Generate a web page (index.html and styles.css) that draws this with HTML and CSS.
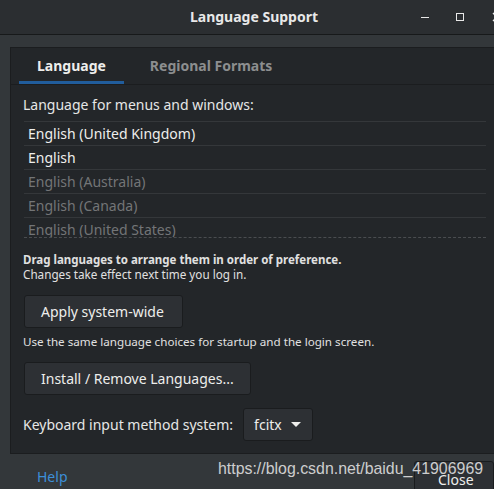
FILE: index.html
```html
<!DOCTYPE html>
<html>
<head>
<meta charset="utf-8">
<link rel="stylesheet" href="styles.css">
</head>
<body>
<div class="window">
  <header class="titlebar">
    <div class="title">Language Support</div>
    <div class="wm">
      <span class="wm-min"></span>
      <span class="wm-max"></span>
      <svg class="wm-close" width="10" height="10" viewBox="0 0 10 10"><path d="M1 1L9 9M9 1L1 9" stroke="#e8e8e8" stroke-width="1.4"/></svg>
    </div>
  </header>
  <main class="body">
    <section class="notebook">
      <nav class="tabs">
        <div class="tab active">Language</div>
        <div class="tab">Regional Formats</div>
      </nav>
      <div class="page">
        <div class="label">Language for menus and windows:</div>
        <div class="list">
          <div class="row">English (United Kingdom)</div>
          <div class="row">English</div>
          <div class="row dim">English (Australia)</div>
          <div class="row dim">English (Canada)</div>
          <div class="row dim">English (United States)</div>
        </div>
        <div class="hint">
          <div class="bold">Drag languages to arrange them in order of preference.</div>
          <div>Changes take effect next time you log in.</div>
        </div>
        <div class="btn btn-apply">Apply system-wide</div>
        <div class="hint2">Use the same language choices for startup and the login screen.</div>
        <div class="btn btn-install">Install / Remove Languages...</div>
        <div class="kbd">
          <span class="kbd-label">Keyboard input method system:</span>
          <div class="combo">fcitx <svg width="10" height="6" viewBox="0 0 10 6"><path d="M0 0H10L5 5Z" fill="#eeeeec"/></svg></div>
        </div>
      </div>
    </section>
    <footer class="actions">
      <span class="help">Help</span>
      <div class="close-btn">Close</div>
    </footer>
  </main>
  <div class="watermark">https://blog.csdn.net/baidu_41906969</div>
</div>
</body>
</html>
```
FILE: styles.css
```css
* { box-sizing: border-box; }
html, body { margin: 0; padding: 0; }
body {
  width: 494px;
  height: 489px;
  overflow: hidden;
  background: #33373a;
  font-family: "Noto Sans", "DejaVu Sans", sans-serif;
  color: #eeeeec;
}
.window { position: relative; width: 494px; height: 489px; overflow: hidden; }
.titlebar {
  height: 35px;
  background: #2b2e31;
  border-bottom: 1px solid #17191a;
  display: flex;
  align-items: center;
  justify-content: center;
  position: relative;
  padding-bottom: 2px;
}
.title { font-weight: bold; font-size: 14px; color: #e8e8e8; margin-left: 14px; }
.wm {
  position: absolute;
  left: 421px;
  top: 12px;
  display: flex;
  align-items: center;
  gap: 27px;
}
.wm-min { width: 8px; height: 1px; background: #e8e8e8; margin-top: 1px; }
.wm-max { width: 8px; height: 8px; border: 1px solid #e8e8e8; }
.wm-close { margin-left: 1px; }
.body { padding: 12px 0 0 10px; }
.notebook {
  height: 407px;
  background: #232629;
  border: 1px solid #1b1d1f;
  border-right: none;
  display: flex;
  flex-direction: column;
}
.tabs {
  height: 37px;
  display: flex;
  gap: 8px;
  padding-left: 8px;
  border-bottom: 1px solid #1b1d1f;
}
.tab {
  padding: 0 18px;
  display: flex;
  align-items: center;
  font-weight: bold;
  font-size: 14px;
  color: #8c8e8f;
  border-bottom: 3px solid transparent;
  padding-top: 2px;
}
.tab.active { color: #eeeeec; border-bottom-color: #215d9c; }
.page { padding: 11px 8px 0 12px; }
.label { font-size: 14px; line-height: 18px; color: #e6e6e6; }
.list {
  margin: 7px 0 0 1px;
  height: 117px;
  overflow: hidden;
  border-top: 1px solid #34373a;
  border-bottom: 1px dashed #4a4d50;
}
.row {
  height: 24px;
  border-bottom: 1px solid #34373a;
  padding-left: 4px;
  font-size: 14px;
  line-height: 23px;
  color: #eeeeec;
}
.row.dim { color: #737577; }
.hint { margin-top: 14px; font-size: 11.7px; line-height: 15px; color: #e0e0e0; }
.bold { font-weight: bold; font-size: 11.5px; }
.btn {
  display: flex;
  align-items: center;
  height: 33px;
  margin-left: 1px;
  padding-left: 16px;
  background: #2d3034;
  border: 1px solid #1a1c1e;
  border-radius: 3px;
  font-size: 14px;
  color: #eeeeec;
}
.btn-apply { width: 159px; margin-top: 13px; }
.btn-install { width: 227px; margin-top: 13px; }
.hint2 { margin-top: 6px; font-size: 11.65px; line-height: 15px; color: #e0e0e0; }
.kbd { display: flex; align-items: center; gap: 10px; margin-top: 13px; }
.kbd-label { font-size: 14px; color: #e6e6e6; }
.combo {
  width: 70px;
  height: 33px;
  display: flex;
  align-items: center;
  gap: 9px;
  padding-left: 10px;
  background: #2d3034;
  border: 1px solid #1a1c1e;
  border-radius: 3px;
  font-size: 14px;
  color: #eeeeec;
}
.actions { display: flex; align-items: flex-start; justify-content: space-between; padding-left: 27px; }
.help { font-size: 14px; color: #3d8fd8; margin-top: 13px; }
.close-btn {
  width: 80px;
  height: 40px;
  margin-top: 7px;
  padding: 8px 0 0 23px;
  background: #2d3034;
  border: 1px solid #1a1c1e;
  border-radius: 3px;
  font-size: 14px;
  color: #eeeeec;
}
.watermark {
  position: absolute;
  left: 218px;
  top: 460px;
  font-family: "Liberation Sans", Arial, sans-serif;
  font-size: 15.9px;
  color: rgba(235, 235, 235, 0.85);
  white-space: nowrap;
}
```
